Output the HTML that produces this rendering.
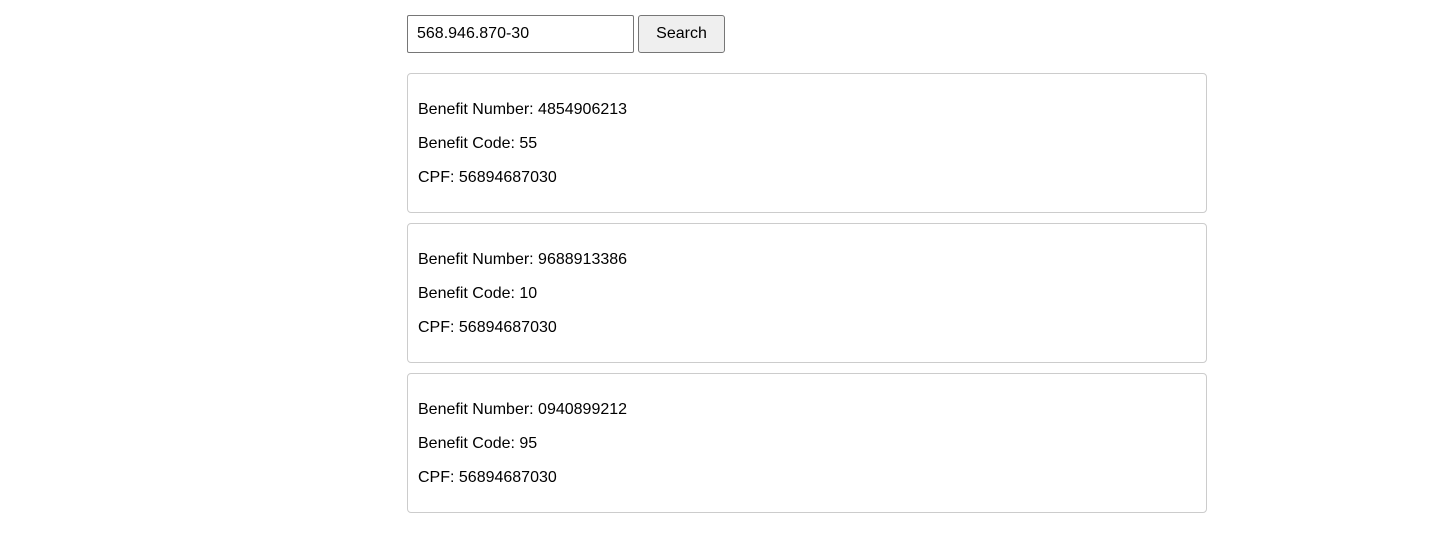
<!DOCTYPE html>
<html><head><style>
body{margin:0;background:#fff;font-family:"Liberation Sans",sans-serif;font-size:16px;color:#000}
.wrap{position:absolute;left:407px;top:15px;width:800px}
.bar{height:38px;display:flex;gap:4px}
input{box-sizing:border-box;width:227px;height:38px;border:1px solid #767676;border-radius:2px;padding:0 9px;font:16px "Liberation Sans",sans-serif;color:#000;margin:0}
button{box-sizing:border-box;width:87px;height:38px;border:1px solid #767676;border-radius:3px;background:#efefef;font:16px "Liberation Sans",sans-serif;color:#000;margin:0}
.card{box-sizing:border-box;height:140px;border:1px solid #ccc;border-radius:4px;padding:11px 10px 9px;margin-top:10px}
.bar+.card{margin-top:20px}
.card p{margin:16px 0;line-height:18px}
</style></head><body>
<div class="wrap">
<div class="bar"><input value="568.946.870-30"><button>Search</button></div>
<div class="card"><p>Benefit Number: 4854906213</p><p>Benefit Code: 55</p><p>CPF: 56894687030</p></div>
<div class="card"><p>Benefit Number: 9688913386</p><p>Benefit Code: 10</p><p>CPF: 56894687030</p></div>
<div class="card"><p>Benefit Number: 0940899212</p><p>Benefit Code: 95</p><p>CPF: 56894687030</p></div>
</div>
</body></html>
